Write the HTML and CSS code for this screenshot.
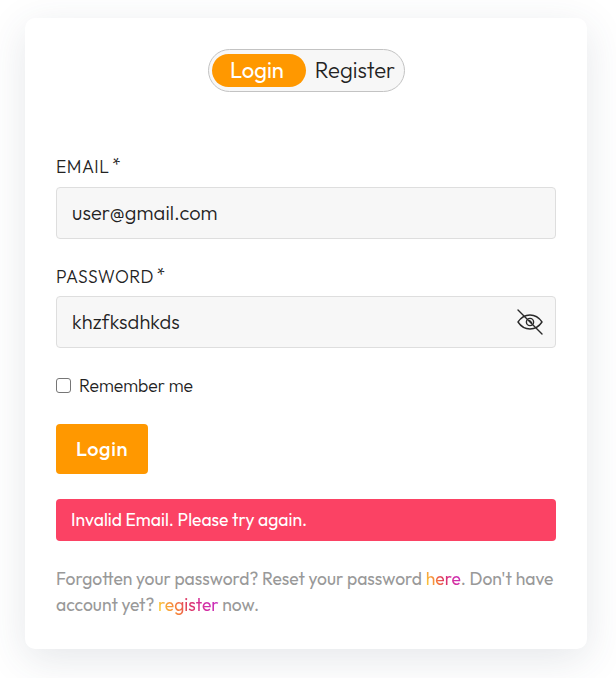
FILE: index.html
```html
<!DOCTYPE html>
<html lang="en">
<head>
<meta charset="utf-8">
<title>Login</title>
<link rel="stylesheet" href="styles.css">
</head>
<body>
<main class="card">
  <nav class="tabs">
    <a class="tab tab-active"><span class="tab-text">Login</span></a>
    <a class="tab tab-register"><span class="tab-text">Register</span></a>
  </nav>
  <form class="form">
    <label class="label" for="email"><span class="label-text">EMAIL</span><span class="star">*</span></label>
    <div class="field"><input class="input" id="email" type="text" value="user@gmail.com"></div>
    <label class="label label-second" for="password"><span class="label-text">PASSWORD</span><span class="star">*</span></label>
    <div class="field">
      <input class="input" id="password" type="text" value="khzfksdhkds">
      <svg class="eye" viewBox="0 0 28 28" fill="none" stroke="#292929" stroke-width="1.4" stroke-linecap="round" stroke-linejoin="round">
        <path d="M2 14C5 9.500 9 7 14 7s9 2.500 12 7c-3 4.500-7 7-12 7S5 18.500 2 14Z"/>
        <circle cx="14" cy="14" r="3.600"/>
        <path d="M13.500 12.500l2 2M2 2l24 24"/>
      </svg>
    </div>
    <label class="remember"><input class="check" type="checkbox"><span>Remember me</span></label>
    <button class="submit" type="button">Login</button>
    <div class="alert">Invalid Email. Please try again.</div>
    <p class="help">Forgotten your password? Reset your password <a class="link">here</a>. Don't have<br>account yet? <a class="link">register</a> now.</p>
  </form>
</main>
</body>
</html>
```
FILE: styles.css
```css
* { box-sizing: border-box; }
body {
  margin: 0;
  height: 678px;
  padding: 18px 29px 29px 25px;
  overflow: hidden;
  background: #fff;
  color: #222;
  font-family: Outfit, Lato, sans-serif;
  font-weight: 300;
}
.card {
  height: 631px;
  padding: 31px;
  border-radius: 10px;
  background: #fff;
  box-shadow: 0 10px 40px rgba(51, 73, 94, .13);
}
.tabs {
  display: flex;
  width: 197px;
  height: 43px;
  margin: 0 auto;
  padding: 4px 3px;
  border: 1px solid #c3c3c3;
  border-radius: 22px;
  background: #f7f7f7;
  position: relative;
  left: .5px;
}
.tab {
  display: flex;
  flex: none;
  align-items: center;
  justify-content: center;
  height: 33px;
  font-size: 22px;
  white-space: nowrap;
}
.tab-active { width: 94px; border-radius: 17px; background: #ff9800; color: #fff; font-weight: 400; padding-right: 4px; }
.tab-register { width: 98px; }
.tab-text { margin-top: -1px; }
.form { margin-top: 60px; }
.label {
  display: flex;
  align-items: center;
  height: 35px;
  padding-bottom: 6px;
  font-size: 17.5px;
}
.label-second { margin-top: 22px; padding-bottom: 4px; }
.label-text { letter-spacing: .5px; }
.star { margin: -5px 0 0 2.5px; font-size: 18px; }
.field { position: relative; height: 52px; }
.input {
  width: 100%;
  height: 52px;
  padding: 0 15px 2px;
  border: 1px solid #dedede;
  border-radius: 4px;
  outline: 0;
  background: #f7f7f7;
  color: #222;
  font: 300 20px Outfit, Lato, sans-serif;
  letter-spacing: .08px;
}
.eye { position: absolute; top: 12px; right: 12px; width: 28px; height: 28px; }
.remember { display: flex; align-items: center; height: 24px; margin-top: 25px; font-size: 17.5px; }
.check {
  appearance: none;
  width: 15px;
  height: 15px;
  margin: 0 8px 0 0;
  border: 1px solid #767676;
  border-radius: 3px;
  background: #fff;
}
.submit {
  display: flex;
  align-items: center;
  justify-content: center;
  width: 92px;
  height: 50px;
  margin: 27px 0 0;
  padding: 0 0 2px;
  border: 0;
  border-radius: 4px;
  background: #ff9800;
  color: #fff;
  font: 500 20px Outfit, Lato, sans-serif;
  letter-spacing: .6px;
}
.alert {
  display: flex;
  align-items: center;
  height: 42px;
  margin-top: 25px;
  padding: 0 0 1px 15px;
  border-radius: 4px;
  background: #fb4264;
  color: #fff;
  font-size: 17.5px;
  font-weight: 400;
}
.help { margin: 25px 0 0; color: #999; font-size: 17.5px; font-weight: 400; line-height: 26px; white-space: nowrap; }
.link {
  background: linear-gradient(70deg, #fcdb35 0%, #f57c3d 32%, #dc3464 50%, #d42fa2 72%, #c32bc8 100%);
  background-clip: text;
  -webkit-background-clip: text;
  color: transparent;
}
```
